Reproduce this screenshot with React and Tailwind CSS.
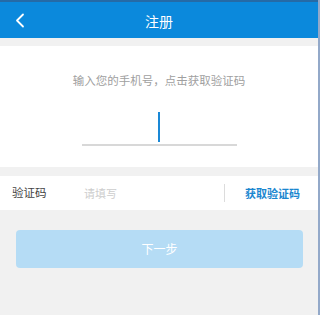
import React from 'react';

const font = { fontFamily: '"Noto Sans CJK SC", "Noto Sans", sans-serif' };

const Register = () => {
    return (
        <div className="w-[320px] h-[315px] flex bg-[#f1f1f1] overflow-hidden" style={font}>
            <div className="flex-1 flex flex-col">
                <div className="h-[2px] bg-[#256aa6]" />
                {/* header */}
                <div className="h-[36px] bg-[#0b89dc] flex items-center relative">
                    <svg className="absolute left-[15px] top-[11px]" width="10" height="15" viewBox="0 0 10 15" fill="none">
                        <path d="M8 1.5L2 7.5L8 13.5" stroke="white" strokeWidth="1.8" strokeLinecap="round" strokeLinejoin="round" />
                    </svg>
                    <div className="flex-1 text-center text-white text-[14px] leading-none pt-[1px]">注册</div>
                </div>
                <div className="h-[8px]" />
                {/* phone input */}
                <div className="h-[121px] bg-white flex flex-col items-center pt-[27px]">
                    <p className="text-[11.5px] leading-[14px] text-[#a0a0a0]">输入您的手机号，点击获取验证码</p>
                    <div className="mt-[25px] w-[2px] h-[30px] bg-[#1a88d6]" />
                    <div className="mt-[2px] w-[155px] h-[1.5px] bg-[#d8d8d8]" />
                </div>
                <div className="h-[9px]" />
                {/* code row */}
                <div className="h-[34px] bg-white flex items-center pl-[12px] pr-[18px]">
                    <span className="w-[72px] text-[11.5px] text-[#444]">验证码</span>
                    <span className="flex-1 text-[11px] text-[#cdcdcd]">请填写</span>
                    <div className="w-px h-[18px] bg-[#dcdcdc] mr-[20px]" />
                    <span className="text-[11px] font-bold text-[#1a86cf]">获取验证码</span>
                </div>
                <button className="mt-[20px] ml-4 mr-[15px] h-[38px] rounded-[4px] bg-[#b5dcf5] text-white text-[12px]">
                    下一步
                </button>
            </div>
            <div className="w-[2px] bg-[#93a9c9]" />
        </div>
    );
};

export default function App() {
    return <Register />;
}
